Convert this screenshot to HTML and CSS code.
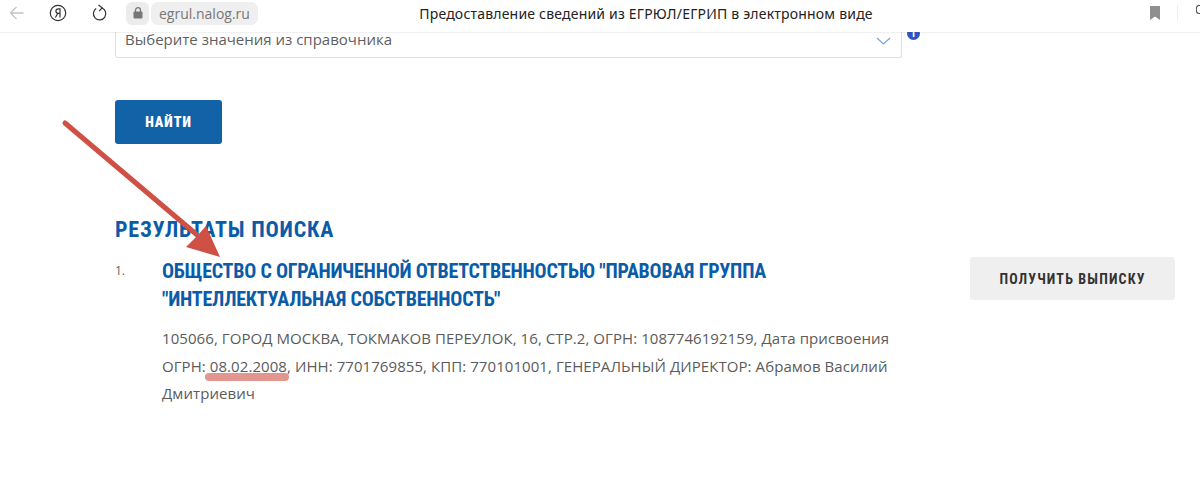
FILE: index.html
```html
<!DOCTYPE html>
<html lang="ru">
<head>
    <meta charset="UTF-8">
    <title>Предоставление сведений из ЕГРЮЛ/ЕГРИП в электронном виде</title>
    <link rel="stylesheet" href="styles.css">
</head>
<body>
    <div class="toolbar">
        <div class="toolbar-left">
            <svg class="icon-back" width="16" height="14" viewBox="0 0 16 14"><path d="M14.5 7H1.5M7.5 1L1.5 7l6 6" fill="none" stroke="#c4c4c4" stroke-width="1.3"/></svg>
            <svg class="icon-ya" width="18" height="18" viewBox="0 0 18 18"><circle cx="9" cy="9" r="7.7" fill="none" stroke="#333" stroke-width="1.2"/><path d="M11 13.5V4.8H9.4C7.8 4.8 6.9 5.7 6.9 7s.9 2.3 2.5 2.3H11M8.8 9.3L6.4 13.5" fill="none" stroke="#333" stroke-width="1.2"/></svg>
            <svg class="icon-reload" width="16" height="18" viewBox="0 0 16 18"><path d="M9.8 3.9a6.2 6.2 0 1 1-5.6.6" fill="none" stroke="#333" stroke-width="1.2"/><path d="M6.5 1l3.6 2.9-3 3.2" fill="none" stroke="#333" stroke-width="1.2"/></svg>
            <div class="address">
                <span class="lock">
                    <svg width="10" height="12" viewBox="0 0 10 12"><rect x="0.5" y="4.5" width="9" height="7" rx="1" fill="#777"/><path d="M2.5 5V3.2a2.5 2.5 0 0 1 5 0V5" fill="none" stroke="#777" stroke-width="1.3"/></svg>
                </span>
                <span class="host">egrul.nalog.ru</span>
            </div>
        </div>
        <div class="page-title">Предоставление сведений из ЕГРЮЛ/ЕГРИП в электронном виде</div>
        <div class="toolbar-right">
            <svg width="10" height="14" viewBox="0 0 10 14"><path d="M0 0h10v14L5 10.5 0 14z" fill="#8f8f8f"/></svg>
            <span class="toolbar-sep"></span>
            <span class="edge-mark"></span>
        </div>
    </div>

    <div class="content">
        <div class="field-row">
            <div class="select">
                <span>Выберите значения из справочника</span>
                <svg width="15" height="8" viewBox="0 0 15 8"><path d="M1 1l6.5 6L14 1" fill="none" stroke="#6ea6d6" stroke-width="1.1"/></svg>
            </div>
            <span class="info-badge">i</span>
        </div>

        <button class="find-btn">Найти</button>

        <h2 class="results-title">Результаты поиска</h2>

        <div class="result">
            <div class="result-num">1.</div>
            <div class="result-body">
                <a class="result-name">ОБЩЕСТВО С ОГРАНИЧЕННОЙ ОТВЕТСТВЕННОСТЬЮ "ПРАВОВАЯ ГРУППА "ИНТЕЛЛЕКТУАЛЬНАЯ СОБСТВЕННОСТЬ"</a>
                <p class="result-text">105066, ГОРОД МОСКВА, ТОКМАКОВ ПЕРЕУЛОК, 16, СТР.2, ОГРН: 1087746192159, Дата присвоения ОГРН: <span class="marked">08.02.2008</span>, ИНН: 7701769855, КПП: 770101001, ГЕНЕРАЛЬНЫЙ ДИРЕКТОР: Абрамов Василий Дмитриевич</p>
            </div>
            <button class="extract-btn">Получить выписку</button>
        </div>
    </div>

    <!-- стрелка поверх страницы -->
    <svg class="arrow" width="240" height="150" viewBox="0 0 240 150">
        <path d="M5 5L136 116" stroke="#cf5044" stroke-width="5" stroke-linecap="round" fill="none"/>
        <path d="M160 139L126 129 137 118 146 108z" fill="#cf5044"/>
    </svg>
</body>
</html>
```

FILE: styles.css
```css
html, body {
    height: 100%;
}

body {
    margin: 0;
    padding: 0;
    overflow: hidden;
    position: relative;
    background-color: white;
    font-family: "Open Sans", Arial, sans-serif;
    color: #5b5b5b;
}

.toolbar {
    position: relative;
    z-index: 2;
    height: 32px;
    box-sizing: border-box;
    padding-bottom: 6px;
    display: flex;
    align-items: center;
    background-color: white;
    box-shadow: 0 1px 1px rgba(0, 0, 0, 0.06);
}

.toolbar-left {
    display: flex;
    align-items: center;
    width: 320px;
    padding-left: 9px;
    box-sizing: border-box;
    flex-shrink: 0;
}

.icon-ya {
    margin-left: 24px;
}

.icon-reload {
    margin-left: 25px;
}

.address {
    display: flex;
    align-items: center;
    gap: 2px;
    margin-left: 18px;
}

.lock {
    width: 23px;
    height: 23px;
    display: flex;
    align-items: center;
    justify-content: center;
    background-color: #ececec;
    border-radius: 6px;
}

.host {
    height: 23px;
    line-height: 23px;
    padding: 0 8px;
    background-color: #efefef;
    border-radius: 7px;
    font-size: 14px;
    color: #777;
}

.page-title {
    width: 652px;
    text-align: center;
    font-family: "Noto Sans", Arial, sans-serif;
    font-size: 14px;
    letter-spacing: 0.2px;
    color: #222;
    flex-shrink: 0;
}

.toolbar-right {
    display: flex;
    align-items: center;
    margin-left: auto;
    height: 100%;
}

.toolbar-sep {
    width: 1px;
    height: 16px;
    margin-left: 17px;
    margin-right: 18px;
    background-color: #eee;
}

.edge-mark {
    width: 3px;
    height: 7px;
    margin-top: -8px;
    border: 1px solid #555;
    border-right: 0;
    border-radius: 3px 0 0 3px;
}

.content {
    margin-top: -8px;
    padding-left: 115px;
    width: 1061px;
}

.field-row {
    display: flex;
    align-items: flex-start;
}

.select {
    width: 766px;
    height: 33px;
    padding-left: 9px;
    padding-right: 10px;
    display: flex;
    align-items: center;
    justify-content: space-between;
    border: 1px solid #e0e0e0;
    border-top: 0;
    border-radius: 0 0 3px 3px;
    font-size: 15px;
    color: #5f5f5f;
}

.select span {
    margin-top: -3px;
}

.info-badge {
    width: 13px;
    height: 13px;
    margin-left: 5px;
    margin-top: 3px;
    border-radius: 50%;
    background-color: #2f55c4;
    color: white;
    font-size: 10px;
    font-weight: bold;
    line-height: 13px;
    text-align: center;
}

.find-btn {
    display: block;
    width: 107px;
    height: 44px;
    margin-top: 42px;
    background-color: #1262a8;
    color: white;
    border: none;
    border-radius: 3px;
    font-family: Roboto, "Liberation Sans", sans-serif;
    font-stretch: 75%;
    font-size: 14px;
    font-weight: 900;
    letter-spacing: 1px;
    text-transform: uppercase;
}

.results-title {
    margin: 73px 0 0;
    font-family: Roboto, "Liberation Sans", sans-serif;
    font-stretch: 75%;
    font-size: 22px;
    line-height: 26px;
    font-weight: bold;
    letter-spacing: 0.8px;
    text-transform: uppercase;
    color: #0b5ca8;
}

.result {
    display: flex;
    align-items: flex-start;
    margin-top: 14px;
}

.result-num {
    width: 47px;
    flex-shrink: 0;
    font-size: 12px;
    line-height: 16px;
    margin-top: 6px;
    color: #666;
}

.result-body {
    width: 730px;
    flex-shrink: 0;
}

.result-name {
    display: block;
    font-family: Roboto, "Liberation Sans", sans-serif;
    font-stretch: 75%;
    font-size: 20px;
    line-height: 28px;
    font-weight: bold;
    letter-spacing: -0.24px;
    color: #0b5ca8;
}

.result-text {
    margin: 12px 0 0;
    font-size: 15px;
    line-height: 27.5px;
    letter-spacing: 0.07px;
    color: #5b5b5b;
}

.marked {
    position: relative;
}

.marked::after {
    content: "";
    position: absolute;
    left: -5px;
    right: -2px;
    bottom: -5px;
    height: 8px;
    border-radius: 4px;
    background-color: rgba(207, 80, 68, 0.6);
}

.extract-btn {
    width: 205px;
    height: 43px;
    margin-left: 78px;
    flex-shrink: 0;
    background-color: #efefef;
    color: #333;
    border: none;
    border-radius: 3px;
    font-family: Roboto, "Liberation Sans", sans-serif;
    font-stretch: 75%;
    font-size: 14px;
    font-weight: bold;
    letter-spacing: 1.15px;
    text-transform: uppercase;
}

.arrow {
    position: absolute;
    left: 60px;
    top: 118px;
    z-index: 3;
}
```
